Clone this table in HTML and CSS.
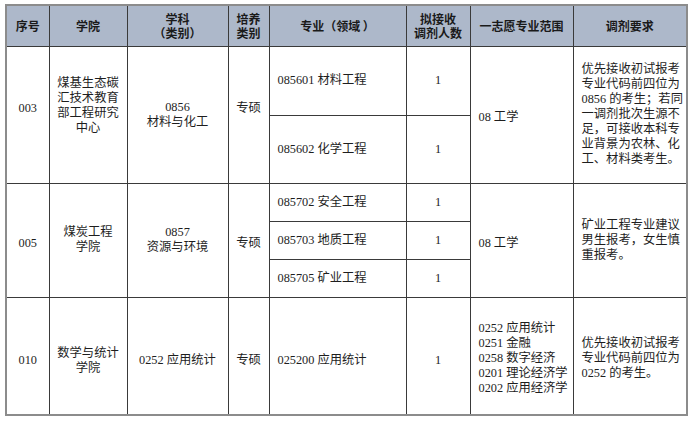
FILE: index.html
```html
<!DOCTYPE html>
<html lang="zh-CN">
<head>
<meta charset="utf-8">
<title>调剂计划</title>
<link rel="stylesheet" href="styles.css">
</head>
<body>
<table class="plan">
  <colgroup>
    <col class="c-no">
    <col class="c-school">
    <col class="c-subject">
    <col class="c-type">
    <col class="c-major">
    <col class="c-num">
    <col class="c-range">
    <col class="c-req">
  </colgroup>
  <thead>
    <tr class="head">
      <th>序号</th>
      <th>学院</th>
      <th>学科<br>（类别）</th>
      <th>培养<br>类别</th>
      <th>专业（领域&nbsp;）</th>
      <th>拟接收<br>调剂人数</th>
      <th>一志愿专业范围</th>
      <th>调剂要求</th>
    </tr>
  </thead>
  <tbody>
    <tr class="r1a">
      <td rowspan="2" class="center up1">003</td>
      <td rowspan="2" class="center up2">煤基生态碳<br>汇技术教育<br>部工程研究<br>中心</td>
      <td rowspan="2" class="center">0856<br>材料与化工</td>
      <td rowspan="2" class="center up1">专硕</td>
      <td class="left">085601 材料工程</td>
      <td class="center">1</td>
      <td rowspan="2" class="left down">08 工学</td>
      <td rowspan="2" class="left">优先接收初试报考<br>专业代码前四位为<br>0856 的考生；若同<br>一调剂批次生源不<br>足，可接收本科专<br>业背景为农林、化<br>工、材料类考生。</td>
    </tr>
    <tr class="r1b">
      <td class="left">085602 化学工程</td>
      <td class="center">1</td>
    </tr>
    <tr class="r2 group">
      <td rowspan="3" class="center down">005</td>
      <td rowspan="3" class="center">煤炭工程<br>学院</td>
      <td rowspan="3" class="center">0857<br>资源与环境</td>
      <td rowspan="3" class="center down">专硕</td>
      <td class="left">085702 安全工程</td>
      <td class="center">1</td>
      <td rowspan="3" class="left down">08 工学</td>
      <td rowspan="3" class="left">矿业工程专业建议<br>男生报考，女生慎<br>重报考。</td>
    </tr>
    <tr class="r2">
      <td class="left">085703 地质工程</td>
      <td class="center">1</td>
    </tr>
    <tr class="r2">
      <td class="left">085705 矿业工程</td>
      <td class="center">1</td>
    </tr>
    <tr class="r3 group">
      <td class="center down2">010</td>
      <td class="center down2">数学与统计<br>学院</td>
      <td class="center down2">0252 应用统计</td>
      <td class="center down2">专硕</td>
      <td class="left down2">025200 应用统计</td>
      <td class="center down2">1</td>
      <td class="left down">0252 应用统计<br>0251 金融<br>0258 数字经济<br>0201 理论经济学<br>0202 应用经济学</td>
      <td class="left down">优先接收初试报考<br>专业代码前四位为<br>0252 的考生。</td>
    </tr>
  </tbody>
</table>
</body>
</html>
```

FILE: styles.css
```css
html, body {
  margin: 0;
  padding: 0;
  background: #ffffff;
}

body {
  padding: 4px 0 0 5px;
}

.plan {
  border-collapse: collapse;
  table-layout: fixed;
  width: 682px;
  border: 2px solid #8c8c8c;
  font-family: "Liberation Serif", "Noto Sans CJK SC", serif;
  font-size: 12.3px;
  line-height: 15px;
  color: #1e1e1e;
}

.c-no { width: 43px; }
.c-school { width: 78px; }
.c-subject { width: 101px; }
.c-type { width: 41px; }
.c-major { width: 137px; }
.c-num { width: 64px; }
.c-range { width: 103px; }
.c-req { width: 114px; }

.plan th,
.plan td {
  border: 1px solid #3a3a3a;
  padding: 0 2px;
  vertical-align: middle;
  white-space: nowrap;
}

.plan th {
  background: #adb8ca;
  font-family: "Noto Sans CJK SC", sans-serif;
  font-weight: 700;
  font-size: 12px;
  line-height: 14px;
  color: #1a1a1a;
  text-align: center;
}

.head { height: 41px; }
.r1a { height: 69px; }
.r1b { height: 68px; }
.r2 { height: 38px; }
.r3 { height: 118px; }

.plan .group td {
  border-top: 1px solid #6e6e6e;
}

.plan td.center { text-align: center; }
.plan td.left { text-align: left; padding-left: 8px; padding-right: 0; }

.plan td.up1 { padding-bottom: 13px; }
.plan td.up2 { padding-bottom: 18px; }
.plan td.down { padding-top: 6px; }
.plan td.down2 { padding-top: 10px; }
```
